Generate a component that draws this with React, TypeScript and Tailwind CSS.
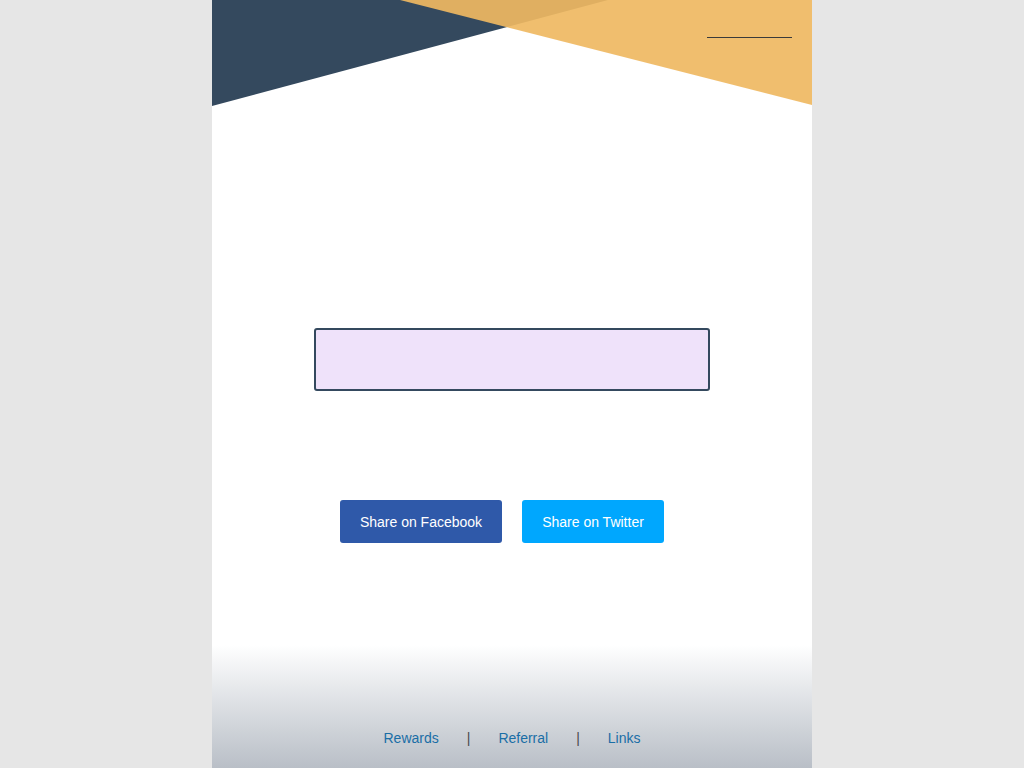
import React from "react";

export default function App() {
  return (
    <div className="min-h-screen w-full bg-[#e6e6e6] flex justify-center" style={{ fontFamily: '"Liberation Sans", Arial, sans-serif' }}>
      <div className="w-[600px] h-[768px] bg-white flex flex-col">
        <header className="relative h-[106px] shrink-0">
          <svg className="absolute inset-0" width="600" height="106" viewBox="0 0 600 106" aria-hidden="true">
            <polygon points="0,0 396,0 0,106" fill="#34495e" />
            <polygon points="188,0 600,0 600,105" fill="#efb862" fillOpacity="0.92" />
          </svg>
          <div className="relative flex justify-end pr-[20px] pt-[37px]">
            <div className="w-[85px] h-px bg-[#3a3a3a]" />
          </div>
        </header>

        <div className="mt-[222px] mx-auto w-[396px] h-[63px] bg-[#efe2fa] border-2 border-[#34495e] rounded-[3px]" />

        <div className="mt-[109px] flex justify-center gap-[20px] pr-[20px]">
          <button className="w-[162px] h-[43px] pt-[2px] bg-[#2f59a9] text-white text-[14px] rounded-[3px]">Share on Facebook</button>
          <button className="w-[142px] h-[43px] pt-[2px] bg-[#00a7fe] text-white text-[14px] rounded-[3px]">Share on Twitter</button>
        </div>

        <footer className="mt-auto h-[123px] bg-gradient-to-b from-white to-[#b9bfc7] flex items-end justify-center pb-[20px]">
          <nav className="flex items-center gap-[28px] text-[14px] leading-[20px]">
            <a className="text-[#1a6ea6]" href="#">Rewards</a>
            <span className="text-[#4a4a4a]">|</span>
            <a className="text-[#1a6ea6]" href="#">Referral</a>
            <span className="text-[#4a4a4a]">|</span>
            <a className="text-[#1a6ea6]" href="#">Links</a>
          </nav>
        </footer>
      </div>
    </div>
  );
}
